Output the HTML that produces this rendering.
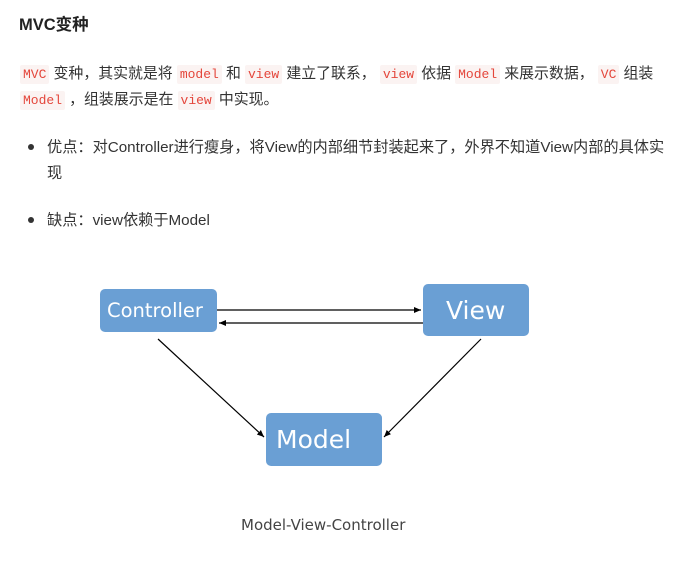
<!DOCTYPE html>
<html><head><meta charset="utf-8"><style>
body{margin:0;background:#fff;width:683px;height:561px;overflow:hidden;font-family:"Liberation Sans","Noto Sans CJK SC",sans-serif;color:#333;}
.t{position:absolute;white-space:nowrap;font-size:15.2px;}
.p{font-size:14.9px;}
code{font-family:"Liberation Mono",monospace;font-size:13px;color:#e4463b;background:#fbf3f2;padding:2px 3px;border-radius:2px;}
.dot{position:absolute;width:6px;height:6px;border-radius:3px;background:#333;}
.box{position:absolute;background:#6a9fd4;border-radius:5px;color:#fff;font-family:"DejaVu Sans",sans-serif;display:flex;align-items:center;}
</style></head><body>
<div class="t" style="left:19px;top:11px;font-size:16.5px;font-weight:bold;color:#222">MVC变种</div>
<div class="t p" style="left:20px;top:62px"><code>MVC</code> 变种，其实就是将 <code>model</code> 和 <code>view</code> 建立了联系， <code>view</code> 依据 <code>Model</code> 来展示数据， <code>VC</code> 组装</div>
<div class="t p" style="left:20px;top:88px"><code>Model</code> ，组装展示是在 <code>view</code> 中实现。</div>
<div class="dot" style="left:28px;top:144px"></div>
<div class="t" style="left:47px;top:135px">优点：对Controller进行瘦身，将View的内部细节封装起来了，外界不知道View内部的具体实</div>
<div class="t" style="left:47px;top:161px">现</div>
<div class="dot" style="left:28px;top:217px"></div>
<div class="t" style="left:47px;top:208px">缺点：view依赖于Model</div>
<div class="box" style="left:100px;top:289px;width:117px;height:43px;font-size:19.5px;padding-left:7px;box-sizing:border-box">Controller</div>
<div class="box" style="left:423px;top:284px;width:106px;height:52px;font-size:25px;padding-left:23px;box-sizing:border-box">View</div>
<div class="box" style="left:266px;top:413px;width:116px;height:53px;font-size:25px;padding-left:10px;box-sizing:border-box">Model</div>
<svg style="position:absolute;left:0;top:0" width="683" height="561">
<defs><marker id="a" markerWidth="8" markerHeight="8" refX="7" refY="4" orient="auto" markerUnits="userSpaceOnUse"><path d="M0,1 L7,4 L0,7 Z" fill="#000"/></marker></defs>
<g stroke="#000" stroke-width="1.2" fill="none">
<line x1="217" y1="310" x2="421" y2="310" marker-end="url(#a)"/>
<line x1="423" y1="323" x2="219" y2="323" marker-end="url(#a)"/>
<line x1="158" y1="339" x2="264" y2="437" marker-end="url(#a)"/>
<line x1="481" y1="339" x2="384" y2="437" marker-end="url(#a)"/>
</g></svg>
<div class="t" style="left:241px;top:516px;font-size:15px;font-family:'DejaVu Sans',sans-serif;color:#444">Model-View-Controller</div>
</body></html>
